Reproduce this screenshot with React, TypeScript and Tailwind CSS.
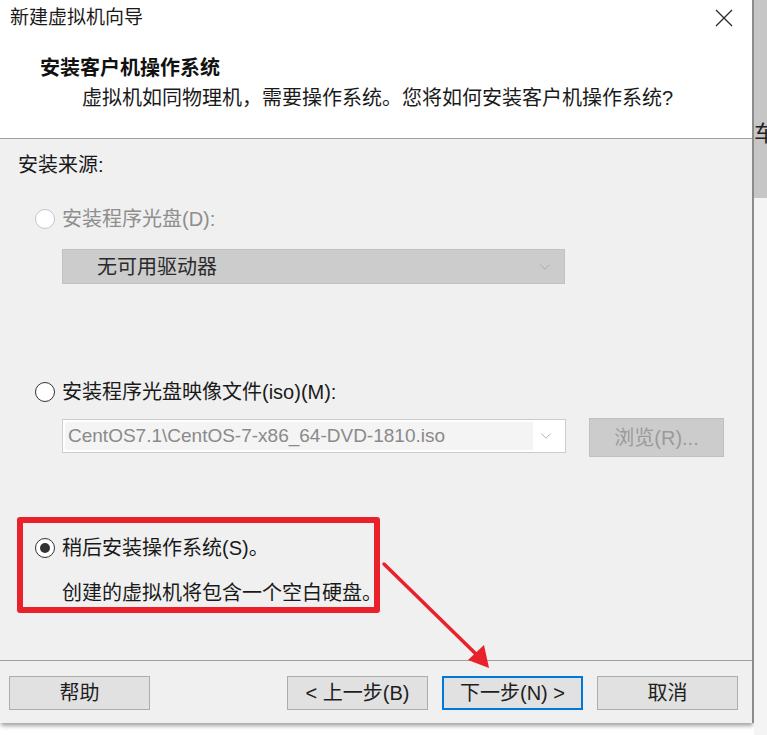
import { ChevronDown } from 'lucide-react'

const font = 'font-["Liberation_Sans","Noto_Sans_CJK_SC",sans-serif]'

function Radio({ state }: { state: 'disabled' | 'off' | 'on' }) {
  if (state === 'disabled') {
    return <span className="w-5 h-5 shrink-0 rounded-full border border-[#c6c6c6] bg-white" />
  }
  return (
    <span className="w-5 h-5 shrink-0 rounded-full border-[1.5px] border-[#333333] bg-white flex items-center justify-center">
      {state === 'on' && <span className="w-[10px] h-[10px] rounded-full bg-[#333333]" />}
    </span>
  )
}

function Button({ label, primary }: { label: string; primary?: boolean }) {
  return (
    <button
      className={`w-[141px] h-[34px] flex items-center justify-center text-[20px] text-[#1e1e1e] bg-[#e1e1e1] ${
        primary ? 'border-2 border-[#0078d7]' : 'border border-[#adadad]'
      }`}
    >
      {label}
    </button>
  )
}

export default function App() {
  return (
    <div className={`relative w-[767px] h-[735px] bg-white overflow-hidden ${font}`}>
      <div className="flex">
        {/* dialog */}
        <div className="w-[754px] shrink-0 h-[723px] flex flex-col border-r-2 border-[#8c8c8c] shadow-[0_4px_4px_-1px_rgba(0,0,0,0.35)]">
          {/* header */}
          <div className="h-[139px] shrink-0 bg-white border-b border-[#a0a0a0] flex flex-col">
            <div className="h-[36px] flex items-center pl-[10px] pr-[19px]">
              <span className="text-[19px] leading-6 text-[#1a1a1a]">新建虚拟机向导</span>
              <svg className="ml-auto" width="18" height="18" viewBox="0 0 18 18">
                <path d="M1 1 L17 17 M17 1 L1 17" stroke="#2b2b2b" strokeWidth="1.3" fill="none" />
              </svg>
            </div>
            <div className="mt-[20px] pl-[40px] text-[20px] leading-6 font-bold text-[#111]">安装客户机操作系统</div>
            <div className="mt-[6px] pl-[82px] text-[20px] leading-6 text-[#1a1a1a]">
              虚拟机如同物理机，需要操作系统。您将如何安装客户机操作系统?
            </div>
          </div>

          {/* body */}
          <div className="flex-1 bg-[#f0f0f0] flex flex-col text-[20px] leading-6 text-[#1a1a1a]">
            <div className="mt-[14px] pl-[18px]">安装来源:</div>

            <div className="mt-[30px] pl-[35px] flex items-center gap-[7px]">
              <Radio state="disabled" />
              <span className="text-[#8e8e8e]">安装程序光盘(D):</span>
            </div>
            <div className="mt-[18px] ml-[62px] w-[503px] h-[35px] bg-[#cccccc] border border-[#c2c2c2] flex items-center pl-[34px] pr-[10px]">
              <span className="text-[#2a2a2a]">无可用驱动器</span>
              <ChevronDown className="ml-auto text-[#a9a9a9]" size={18} strokeWidth={1.2} />
            </div>

            <div className="mt-[96px] pl-[35px] flex items-center gap-[7px]">
              <Radio state="off" />
              <span>安装程序光盘映像文件(iso)(M):</span>
            </div>
            <div className="mt-[14px] ml-[62px] flex items-start">
              <div className="mt-[1px] w-[504px] h-[34px] bg-white border border-[#cdcdcd] flex items-center p-[2px] pr-[10px]">
                <div className="h-full w-[468px] bg-[#f4f4f4] flex items-center pl-[3px]">
                  <span className="text-[19px] text-[#8a8a8a] whitespace-nowrap">CentOS7.1\CentOS-7-x86_64-DVD-1810.iso</span>
                </div>
                <ChevronDown className="ml-auto text-[#a9a9a9]" size={18} strokeWidth={1.2} />
              </div>
              <div className="ml-[23px] w-[135px] h-[39px] bg-[#cccccc] border border-[#bfbfbf] flex items-center justify-center text-[#9b9b9b]">
                浏览(R)...
              </div>
            </div>

            <div className="mt-[60px] ml-[17px] w-[363px] h-[96px] border-[6px] border-[#e8212b] rounded-[3px] flex flex-col">
              <div className="mt-[13px] pl-[12px] flex items-center gap-[7px]">
                <Radio state="on" />
                <span>稍后安装操作系统(S)。</span>
              </div>
              <div className="mt-[21px] pl-[39px] whitespace-nowrap">创建的虚拟机将包含一个空白硬盘。</div>
            </div>
          </div>

          {/* footer */}
          <div className="h-[63px] shrink-0 bg-[#f0f0f0] border-t border-[#a0a0a0] flex items-start pt-[15px] pl-[9px] pr-[14px]">
            <Button label="帮助" />
            <div className="ml-auto flex gap-[14px]">
              <Button label="< 上一步(B)" />
              <Button label="下一步(N) >" primary />
              <Button label="取消" />
            </div>
          </div>
        </div>

        {/* window behind */}
        <div className="w-[13px] shrink-0 h-[735px] flex flex-col">
          <div className="h-[198px] shrink-0 bg-[#c6c6c6] overflow-hidden pt-[122px]">
            <span className="block w-[13px] overflow-hidden text-[22px] leading-6 text-[#222]">车</span>
          </div>
          <div className="flex-1 bg-[#f4f4f4]" />
        </div>
      </div>

      {/* annotation arrow */}
      <svg className="absolute left-0 top-0 pointer-events-none" width="767" height="735">
        <line x1="384" y1="564" x2="478" y2="656" stroke="#e8212b" strokeWidth="3.5" strokeLinecap="round" />
        <polygon points="489,668 468,660 484,645" fill="#e8212b" />
      </svg>
    </div>
  )
}
